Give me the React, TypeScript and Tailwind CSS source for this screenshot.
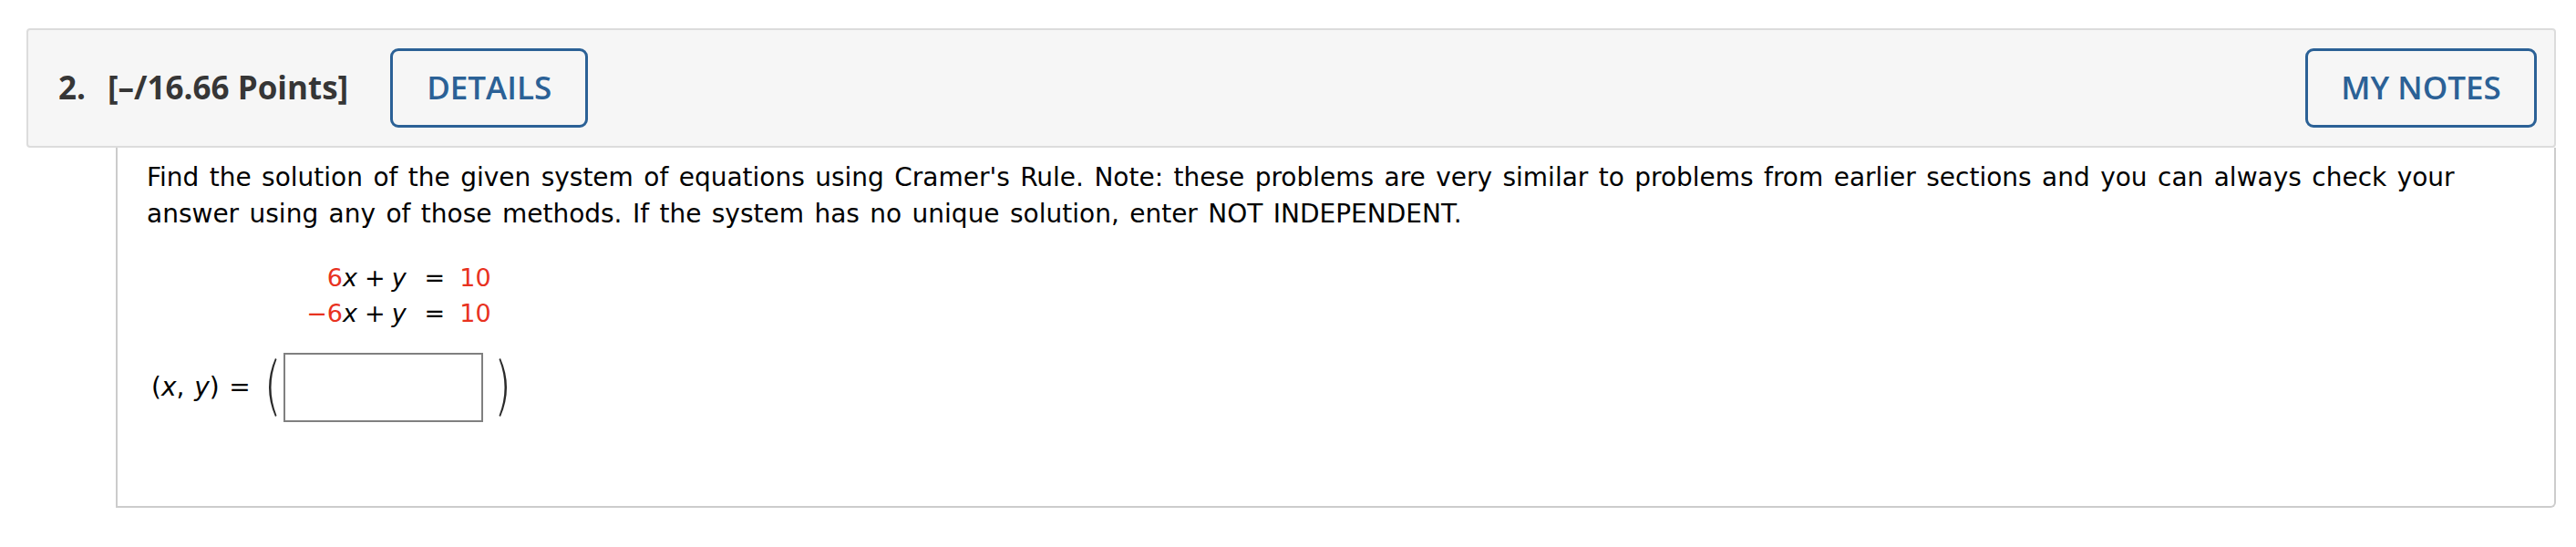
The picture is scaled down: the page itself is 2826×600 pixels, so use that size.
import React from "react";

function Paren({ flip = false }: { flip?: boolean }) {
  return (
    <svg
      width="16"
      height="64"
      viewBox="0 0 16 64"
      className={flip ? "-scale-x-100" : ""}
    >
      <path d="M14 0 Q0 32 14 64 L15.5 63 Q3.5 32 15.5 1 Z" fill="#2a2a2a" />
    </svg>
  );
}

function EqRow({ neg }: { neg?: boolean }) {
  return (
    <div className="flex items-baseline">
      <span className="w-[58px] text-right whitespace-nowrap">
        <span className="text-[#e8321f]">{neg ? "\u2212" : ""}</span>
        <span className="text-[#e8321f]">6</span>
        <i>x</i>
      </span>
      <span className="ml-[8px]">+</span>
      <i className="ml-[7px]">y</i>
      <span className="ml-[20px]">=</span>
      <span className="ml-[16px] text-[#e8321f]">10</span>
    </div>
  );
}

export default function App() {
  return (
    <div className="min-h-[600px] bg-white pt-[31px] pl-[29px] pr-[22px]">
      <div className="flex items-center rounded-[4px] border-2 border-[#dcdcdc] bg-[#f6f6f6] py-[20px] pl-[33px] pr-[19px] font-['Open_Sans',sans-serif] text-[35px] text-[#363636]">
        <span className="font-bold">2.</span>
        <span className="ml-[24px] font-bold">[–/16.66 Points]</span>
        <button className="ml-[46px] flex h-[87px] w-[217px] items-center justify-center rounded-[9px] border-[3px] border-[#2b6196] font-semibold text-[#2b6196]">
          DETAILS
        </button>
        <button className="ml-auto flex h-[87px] w-[254px] items-center justify-center rounded-[9px] border-[3px] border-[#2b6196] font-semibold text-[#2b6196]">
          MY NOTES
        </button>
      </div>
      <div className="ml-[98px] rounded-br-[6px] border-2 border-t-0 border-[#cccccc] pt-[13px] pb-[92px] pl-[32px] pr-[30px] font-['DejaVu_Sans',Verdana,sans-serif] text-[28px] leading-[40px] text-black">
        <p className="[word-spacing:2.5px]">
          Find the solution of the given system of equations using Cramer's
          Rule. Note: these problems are very similar to problems from earlier
          sections and you can always check your answer using any of those
          methods. If the system has no unique solution, enter NOT
          INDEPENDENT.
        </p>
        <div className="mt-[30px] ml-[173px] text-[27px] leading-[39px]">
          <EqRow />
          <EqRow neg />
        </div>
        <div className="mt-[24px] ml-[5px] flex items-center">
          <span className="[word-spacing:1.8px]">
            (<i>x</i>, <i>y</i>) =
          </span>
          <span className="ml-[13px] flex">
            <Paren />
          </span>
          <input
            type="text"
            className="ml-[7px] h-[76px] w-[219px] border-2 border-[#808080] bg-white outline-none"
          />
          <span className="ml-[17px] flex">
            <Paren flip />
          </span>
        </div>
      </div>
    </div>
  );
}
